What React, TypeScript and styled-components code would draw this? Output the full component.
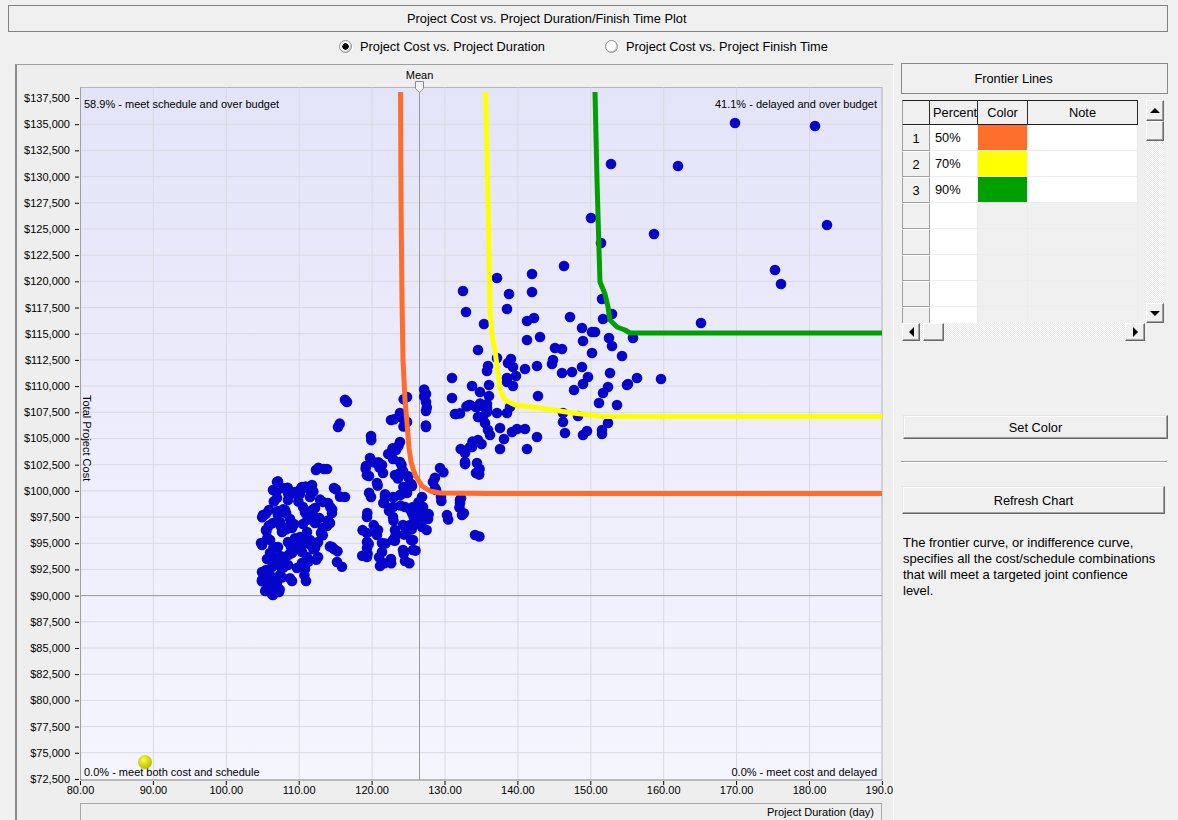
import React from "react";
import styled, { createGlobalStyle } from "styled-components";

// ---------- chart data ----------
const X0 = 80.5;
const XS = 7.29;
const xs = (d: number) => X0 + (d - 80) * XS;
const ys = (c: number) => 98 + ((137500 - c) / 2500) * 26.19;

const PLOT = { left: 80.5, top: 87.5, right: 882, bottom: 780 };

const parse = (s: string) =>
  s
    .trim()
    .split(/\s+/)
    .map((p) => p.split(",").map(Number) as [number, number]);

const clusterA = parse(`277,482 273,490 287,488 295,492 302,487 312,485 316,470 327,469 334,488 345,497 310,497 300,494 290,493 277,498 288,500 269,510 278,511 285,510 303,507 305,512 315,508 323,502 328,503 332,513 330,523 327,526 321,533 315,523 313,519 303,524 290,519 290,527 280,522 273,523 282,532 292,528 300,537 307,532 310,540 318,542 315,548 318,557 332,547 334,549 337,562 305,543 297,543 292,547 288,542 278,547 270,553 267,559 275,558 283,557 292,553 302,552 307,557 302,563 305,569 297,568 288,565 280,563 272,567 265,577 272,577 280,575 292,581 306,581 268,585 277,583 272,593 279,592 273,595 263,515 262,545 262,572 262,580 266,530 270,540`);

const clusterB = parse(`347,402 338,427 407,397 426,394 426,402 426,411 426,427 400,413 391,420 407,422 371,436 456,414 470,405 477,407 487,408 478,417 478,440 470,447 465,453 465,462 477,463 476,473 440,468 460,500 460,503 462,515 475,535 400,442 396,450 393,459 400,462 370,458 366,466 382,465 383,473 369,476 377,483 395,475 403,471 408,477 407,487 412,486 371,497 385,497 393,497 400,495 407,493 422,497 423,507 384,503 393,507 405,507 413,507 428,519 422,527 412,513 393,517 367,517 378,530 367,533 367,542 367,548 367,557 377,535 382,543 382,552 380,566 391,559 405,561 403,550 413,540 413,550 393,540 395,530 403,525 406,533 410,525 415,520 423,513 436,490 441,497 447,515 433,482`);

const clusterC = parse(`463,291 497,278 532,274 564,266 509,294 532,292 466,312 507,309 484,324 527,321 534,318 570,317 602,299 612,314 603,319 582,328 592,332 595,332 527,340 540,337 583,341 609,338 612,346 633,338 555,348 562,349 592,353 622,356 478,350 553,360 552,364 511,359 508,363 497,358 488,366 487,371 513,367 525,369 537,366 582,367 562,373 572,372 588,377 610,373 637,378 661,379 452,378 627,385 628,384 583,384 574,390 608,387 603,393 599,403 617,405 507,378 516,376 489,385 472,386 480,392 513,386 507,382 452,398 489,396 469,405 476,407 487,404 538,396 455,414 487,412 497,413 507,413 510,407 479,417 485,423 563,413 563,422 578,416 608,423 565,433 583,435 587,431 602,430 602,434 488,430 490,435 500,428 512,432 517,429 525,429 504,439 537,437 478,441 472,447 500,449 527,449`);

const outliers = parse(`735,123 815,126 611,164 678,166 827,225 591,218 654,234 601,243 775,270 781,284 701,323`);

// small seeded generator to thicken the two dense clusters
const seeded = (seed: number) => () => {
  seed = (seed + 0x6d2b79f5) | 0;
  let t = Math.imul(seed ^ (seed >>> 15), 1 | seed);
  t = (t + Math.imul(t ^ (t >>> 7), 61 | t)) ^ t;
  return ((t ^ (t >>> 14)) >>> 0) / 4294967296;
};
const rnd = seeded(42);
const jitter = (pts: [number, number][]) =>
  pts.map(([x, y]) => [x + (rnd() - 0.5) * 10, y + (rnd() - 0.5) * 12] as [number, number]);

const dots: [number, number][] = [
  ...clusterA,
  ...jitter(clusterA),
  ...clusterB,
  ...jitter(clusterB),
  ...clusterC,
  ...outliers,
];

const frontier = [
  {
    color: "#ff6c2c",
    pts: "400.5,92 401,200 402,300 403,360 405,400 407,423 409,448 411,462 415,475 422,486 430,491 440,493 490,493.5 882,493.5",
  },
  {
    color: "#ffff00",
    pts: "485.5,92 488,200 489,250 490,310 492,335 495,350 498,375 500,390 505,400 515,405 540,408 573,413 603,416.5 882,416.5",
  },
  {
    color: "#00a000",
    pts: "595,92 597,180 599,250 600,282 605,294 608,307 610,320 617,327 625,330 630,333 882,333",
  },
];

const rows = [
  { n: "1", pct: "50%", color: "#fe6f2c" },
  { n: "2", pct: "70%", color: "#ffff00" },
  { n: "3", pct: "90%", color: "#00a000" },
  { n: "", pct: "", color: "" },
  { n: "", pct: "", color: "" },
  { n: "", pct: "", color: "" },
  { n: "", pct: "", color: "" },
  { n: "", pct: "", color: "" },
];

const money = (c: number) => "$" + c.toLocaleString("en-US");

// ---------- components ----------
const Arrow: React.FC<{ dir: "up" | "down" | "left" | "right" }> = ({ dir }) => {
  const pts = {
    up: "0,6 5,1 10,6",
    down: "0,1 5,6 10,1",
    left: "6,0 1,5 6,10",
    right: "1,0 6,5 1,10",
  }[dir];
  const vert = dir === "up" || dir === "down";
  return (
    <svg width={vert ? 10 : 7} height={vert ? 7 : 10} viewBox={vert ? "0 0 10 7" : "0 0 7 10"}>
      <polygon points={pts} fill="#000" />
    </svg>
  );
};

const Chart: React.FC = () => {
  const yTicks = Array.from({ length: 27 }, (_, i) => 137500 - i * 2500);
  const xTicks = Array.from({ length: 12 }, (_, i) => 80 + i * 10);
  const meanX = 419.5;
  return (
    <svg width={876} height={736} viewBox="17 65 876 736" style={{ display: "block" }}>
      <defs>
        <linearGradient id="plotBg" x1="0" y1="0" x2="0" y2="1">
          <stop offset="0" stopColor="#e4e4f9" />
          <stop offset="1" stopColor="#f5f5fe" />
        </linearGradient>
        <radialGradient id="ball" cx="0.4" cy="0.35" r="0.7">
          <stop offset="0" stopColor="#ffff3a" />
          <stop offset="1" stopColor="#b4b400" />
        </radialGradient>
      </defs>

      <rect
        x={PLOT.left}
        y={PLOT.top}
        width={PLOT.right - PLOT.left}
        height={PLOT.bottom - PLOT.top}
        fill="url(#plotBg)"
        stroke="#b4b4bc"
      />

      {yTicks.slice(1, -1).map((c) => (
        <line key={c} x1={PLOT.left} x2={PLOT.right} y1={ys(c)} y2={ys(c)} stroke="#d9d9e2" />
      ))}
      {xTicks.slice(1, -1).map((v) => (
        <line key={v} x1={xs(v)} x2={xs(v)} y1={PLOT.top} y2={PLOT.bottom} stroke="#d9d9e2" />
      ))}
      <line x1={PLOT.left} x2={PLOT.left} y1={PLOT.top} y2={PLOT.bottom} stroke="#a0a0a0" />
      <line x1={PLOT.left} x2={PLOT.right} y1={PLOT.bottom} y2={PLOT.bottom} stroke="#a0a0a0" />

      {yTicks.map((c) => (
        <g key={c}>
          <TickLabel x={70} y={ys(c)} textAnchor="end" dominantBaseline="central">
            {money(c)}
          </TickLabel>
          <line x1={75} x2={79} y1={ys(c) + 0.5} y2={ys(c) + 0.5} stroke="#000" />
        </g>
      ))}
      {xTicks.map((v) => (
        <g key={v}>
          <line x1={xs(v)} x2={xs(v)} y1={781} y2={785} stroke="#000" />
          <TickLabel x={xs(v)} y={790} textAnchor="middle" dominantBaseline="central">
            {v.toFixed(2)}
          </TickLabel>
        </g>
      ))}

      <TickLabel transform="rotate(90 83 395)" x={83} y={395}>
        Total Project Cost
      </TickLabel>

      <line x1={meanX} x2={meanX} y1={92} y2={PLOT.bottom} stroke="#9a9a9a" />
      <line x1={PLOT.left} x2={PLOT.right} y1={ys(90000)} y2={ys(90000)} stroke="#9a9a9a" />
      <TickLabel x={meanX} y={75} textAnchor="middle" dominantBaseline="central">
        Mean
      </TickLabel>
      <path d={`M${meanX - 4},81.5 h8 v7 l-4,4 l-4,-4 z`} fill="#f2f2f2" stroke="#8a8a8a" />

      <TickLabel x={84} y={104} dominantBaseline="central">
        58.9% - meet schedule and over budget
      </TickLabel>
      <TickLabel x={877} y={104} textAnchor="end" dominantBaseline="central">
        41.1% - delayed and over budget
      </TickLabel>
      <TickLabel x={84} y={772} dominantBaseline="central">
        0.0% - meet both cost and schedule
      </TickLabel>
      <TickLabel x={877} y={772} textAnchor="end" dominantBaseline="central">
        0.0% - meet cost and delayed
      </TickLabel>

      {dots.map(([x, y], i) => (
        <circle key={i} cx={x} cy={y} r={5.3} fill="#0505cc" />
      ))}

      {frontier.map((f) => (
        <polyline
          key={f.color}
          points={f.pts}
          fill="none"
          stroke={f.color}
          strokeWidth={5}
          strokeLinejoin="round"
        />
      ))}

      <circle cx={145} cy={762} r={7} fill="url(#ball)" />
    </svg>
  );
};

const App: React.FC = () => {
  return (
    <>
      <GlobalStyle />
      <Page>
        <TitleBox>Project Cost vs. Project Duration/Finish Time Plot</TitleBox>
        <RadioRow>
          <RadioOption>
            <RadioCircle $checked />
            Project Cost vs. Project Duration
          </RadioOption>
          <RadioOption>
            <RadioCircle />
            Project Cost vs. Project Finish Time
          </RadioOption>
        </RadioRow>
        <MainRow>
          <ChartFrame>
            <Chart />
            <XTitle>Project Duration (day)</XTitle>
          </ChartFrame>
          <SidePanel>
            <PanelHeader>Frontier Lines</PanelHeader>
            <GridBox>
              <Table>
                <HeadCell $first />
                <HeadCell>Percent</HeadCell>
                <HeadCell $center>Color</HeadCell>
                <HeadCell $center>Note</HeadCell>
                <Filler />
                {rows.map((r, i) => (
                  <React.Fragment key={i}>
                    <RowHead>{r.n}</RowHead>
                    <Cell $bg="#ffffff">{r.pct}</Cell>
                    <Cell $bg={r.color || "#f0f0f0"} />
                    <Cell $bg={r.n ? "#ffffff" : "#f0f0f0"} />
                    <Filler />
                  </React.Fragment>
                ))}
              </Table>
              <VScroll>
                <ScrollBtn $h={21}>
                  <Arrow dir="up" />
                </ScrollBtn>
                <Thumb $w={18} $h={20} />
                <Track />
                <ScrollBtn $h={20}>
                  <Arrow dir="down" />
                </ScrollBtn>
              </VScroll>
              <HScroll>
                <ScrollBtn $w={18}>
                  <Arrow dir="left" />
                </ScrollBtn>
                <Track $gap={3} />
                <Thumb $w={21} $h={18} />
                <Track />
                <ScrollBtn $w={20}>
                  <Arrow dir="right" />
                </ScrollBtn>
              </HScroll>
              <Corner />
            </GridBox>
            <PanelButton $w={265} $h={24} $top={73} $left={2}>
              Set Color
            </PanelButton>
            <Separator />
            <PanelButton $w={263} $h={28} $top={23} $left={1}>
              Refresh Chart
            </PanelButton>
            <Description>
              The frontier curve, or indifference curve, specifies all the cost/schedule combinations
              that will meet a targeted joint confience level.
            </Description>
          </SidePanel>
        </MainRow>
      </Page>
    </>
  );
};

// ---------- styles ----------
const GlobalStyle = createGlobalStyle`
  html, body {
    margin: 0;
    padding: 0;
    background: #f0f0f0;
  }
  body {
    font-family: "Liberation Sans", Arial, sans-serif;
    font-size: 12.8px;
    color: #000;
    overflow: hidden;
  }
`;

const Page = styled.div`
  width: 1178px;
  height: 820px;
  padding: 5px 10px 0 8px;
  box-sizing: border-box;
  display: flex;
  flex-direction: column;
  overflow: hidden;
`;

const TitleBox = styled.div`
  height: 27px;
  box-sizing: border-box;
  border: 1px solid #828282;
  display: flex;
  align-items: center;
  padding-left: 398px;
`;

const RadioRow = styled.div`
  height: 28px;
  display: flex;
  align-items: center;
  padding-left: 331px;
  gap: 60px;
`;

const RadioOption = styled.label`
  display: flex;
  align-items: center;
  gap: 8px;
`;

const RadioCircle = styled.span<{ $checked?: boolean }>`
  width: 13px;
  height: 13px;
  box-sizing: border-box;
  border-radius: 50%;
  border: 1px solid #8c8c8c;
  background: radial-gradient(circle, ${(p) => (p.$checked ? "#000 0 3px" : "#fff 0 3px")}, #fff 3.5px);
  box-shadow: -1px -1px 0 #c8c8c8 inset, 1px 1px 0 #ffffff;
`;

const MainRow = styled.div`
  flex: 1;
  min-height: 0;
  display: flex;
  gap: 7px;
  margin-top: 3px;
  padding-left: 7px;
`;

const ChartFrame = styled.div`
  width: 879px;
  box-sizing: border-box;
  margin-top: 1px;
  border-top: 1px solid #a0a0a0;
  border-left: 2px solid #8c8c8c;
  border-right: 1px solid #ffffff;
  background: #eeeeee;
  display: flex;
  flex-direction: column;
  overflow: hidden;
`;

const TickLabel = styled.text`
  font-family: "Liberation Sans", Arial, sans-serif;
  font-size: 11px;
  fill: #000;
`;

const XTitle = styled.div`
  margin: 2px 0 0 63px;
  width: 802px;
  height: 17px;
  box-sizing: border-box;
  border: 1px solid #a8a8a8;
  border-bottom: none;
  display: flex;
  align-items: center;
  justify-content: flex-end;
  padding-right: 7px;
  font-size: 11px;
`;

const SidePanel = styled.div`
  width: 267px;
  display: flex;
  flex-direction: column;
`;

const PanelHeader = styled.div`
  height: 31px;
  box-sizing: border-box;
  border: 1px solid #888888;
  display: flex;
  align-items: center;
  justify-content: center;
  padding-right: 42px;
`;

const GridBox = styled.div`
  margin: 6px 0 0 1px;
  width: 263px;
  height: 242px;
  background: #f0f0f0;
  display: grid;
  grid-template-columns: 244px 18px;
  grid-template-rows: 223px 18px;
`;

const Table = styled.div`
  display: grid;
  grid-template-columns: 28px 48px 50px 110px 8px;
  grid-template-rows: 25px;
  grid-auto-rows: 26px;
  overflow: hidden;
  background: #f0f0f0;
`;

const HeadCell = styled.div<{ $first?: boolean; $center?: boolean }>`
  box-sizing: border-box;
  border-top: 1px solid #1e1e1e;
  border-bottom: 1px solid #1e1e1e;
  border-right: 1px solid #2a2a2a;
  border-left: ${(p) => (p.$first ? "1px solid #a0a0a0" : "none")};
  background: #f0f0f0;
  display: flex;
  align-items: center;
  justify-content: ${(p) => (p.$center ? "center" : "flex-start")};
  padding-left: ${(p) => (p.$center ? "0" : "3px")};
  white-space: nowrap;
  overflow: hidden;
`;

const Filler = styled.div`
  background: #f0f0f0;
`;

const RowHead = styled.div`
  box-sizing: border-box;
  border-left: 1px solid #a0a0a0;
  border-right: 1px solid #a0a0a0;
  border-bottom: 1px solid #a0a0a0;
  border-top: 1px solid #ffffff;
  background: #f0f0f0;
  display: flex;
  align-items: center;
  justify-content: center;
`;

const Cell = styled.div<{ $bg: string }>`
  box-sizing: border-box;
  background: ${(p) => p.$bg};
  border-bottom: 1px solid #ececec;
  border-right: 1px solid #ececec;
  display: flex;
  align-items: center;
  padding-left: 5px;
`;

const VScroll = styled.div`
  display: flex;
  flex-direction: column;
  width: 18px;
`;

const HScroll = styled.div`
  display: flex;
  height: 18px;
  width: 243px;
`;

const Corner = styled.div`
  background: #f0f0f0;
`;

const ScrollBtn = styled.div<{ $w?: number; $h?: number }>`
  flex: none;
  width: ${(p) => (p.$w ? `${p.$w}px` : "18px")};
  height: ${(p) => (p.$h ? `${p.$h}px` : "18px")};
  box-sizing: border-box;
  background: #f0f0f0;
  border: 1px solid;
  border-color: #ffffff #696969 #696969 #ffffff;
  box-shadow: inset -1px -1px 0 #a0a0a0;
  display: flex;
  align-items: center;
  justify-content: center;
`;

const Thumb = styled.div<{ $w: number; $h: number }>`
  flex: none;
  width: ${(p) => p.$w}px;
  height: ${(p) => p.$h}px;
  box-sizing: border-box;
  background: #f0f0f0;
  border: 1px solid;
  border-color: #ffffff #696969 #696969 #ffffff;
  box-shadow: inset -1px -1px 0 #a0a0a0;
`;

const Track = styled.div<{ $gap?: number }>`
  flex: ${(p) => (p.$gap ? `0 0 ${p.$gap}px` : "1")};
  background: repeating-conic-gradient(#ffffff 0 25%, #e8e8e8 0 50%) 0 0 / 2px 2px;
`;

const PanelButton = styled.div<{ $w: number; $h: number; $top: number; $left: number }>`
  width: ${(p) => p.$w}px;
  height: ${(p) => p.$h}px;
  margin-top: ${(p) => p.$top}px;
  margin-left: ${(p) => p.$left}px;
  box-sizing: border-box;
  background: #f0f0f0;
  border: 1px solid;
  border-color: #e3e3e3 #696969 #696969 #e3e3e3;
  box-shadow: inset -1px -1px 0 #a0a0a0, inset 1px 1px 0 #ffffff;
  display: flex;
  align-items: center;
  justify-content: center;
`;

const Separator = styled.div`
  margin-top: 22px;
  width: 266px;
  height: 1px;
  background: #a0a0a0;
  border-bottom: 1px solid #ffffff;
`;

const Description = styled.p`
  margin: 21px 0 0 2px;
  width: 258px;
  font-size: 13px;
  line-height: 16px;
`;

export default App;
